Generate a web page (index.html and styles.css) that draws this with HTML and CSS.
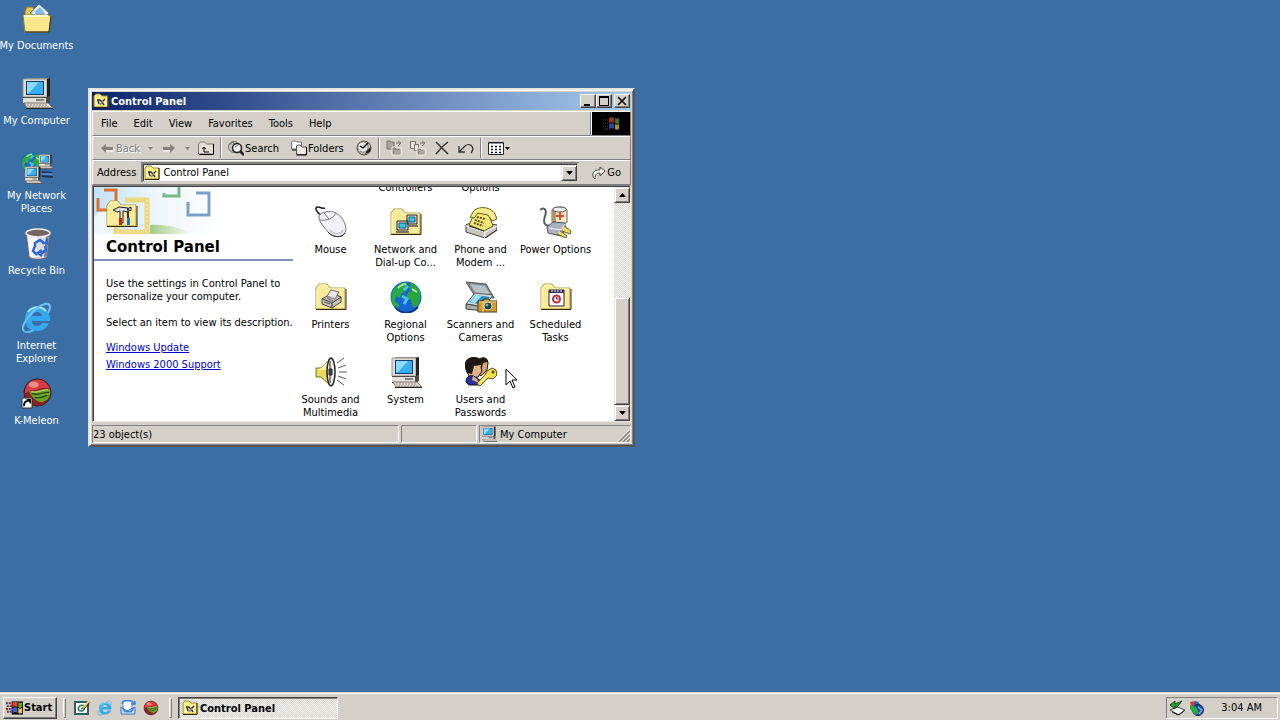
FILE: index.html
```html
<!DOCTYPE html>
<html lang="en">
<head>
    <meta charset="UTF-8">
    <meta name="viewport" content="width=device-width, initial-scale=1.0">
    <title>Control Panel</title>
    <link rel="stylesheet" href="styles.css">
</head>
<body>

    <!-- Shared icons -->
    <svg class="sprite" aria-hidden="true">
        <symbol id="computer" viewBox="0 0 32 32">
            <path d="M3 3l3-2h22v19l-3 2z" fill="#8c8a86"/>
            <path d="M2 2h24v18H2z" fill="#dedbd3" stroke="#98958e"/>
            <path d="M26 2l3-1v18l-3 2z" fill="#222"/>
            <path d="M5 4h18v14H5z" fill="#113a6e"/>
            <path d="M6 5h16v12H6z" fill="#39aef5"/>
            <path d="M6 5h12L8 16H6z" fill="#8edaff"/>
            <path d="M2 20h24l3-1v6l-3 2H2z" fill="#4c4946"/>
            <path d="M2 21h23v5H2z" fill="#e4e0d9"/>
            <path d="M15 23h8" stroke="#222"/>
            <path d="M3 26h24l5 5H6z" fill="#e9ded6" stroke="#77706c"/>
            <path d="M6 28h20M8 30h20" stroke="#8b827c" stroke-dasharray="2 1"/>
            <path d="M5 31.500h27" stroke="#222"/>
        </symbol>
        <symbol id="folder" viewBox="0 0 32 32">
            <path d="M1 28V7l3-4h8l3 4h15v21z" fill="#fcea98" stroke="#b59a35"/>
            <path d="M2 27V8l3-4h6l3 4h15" fill="none" stroke="#fffbd0"/>
            <path d="M31 8v20.500H1" fill="none" stroke="#32290c"/>
        </symbol>
        <symbol id="cpanel" viewBox="0 0 16 16">
            <path d="M1 14V3l2-2h4l2 2h6v11z" fill="#fbec84" stroke="#a08c28"/>
            <path d="M15 3v11.500H1" fill="none" stroke="#2b2406"/>
            <path d="M3 6h10v6H3z" fill="#fff3b4"/>
            <path d="M4 7h3l2 2 3-3M5 7l1 4M9 9l2 3" fill="none" stroke="#33332b" stroke-width="1.500"/>
            <path d="M10 8l-3 4" stroke="#888" stroke-width="1.500"/>
        </symbol>
        <symbol id="ie" viewBox="0 0 32 32">
            <path d="M16 4C8 4 4 10 4 17c0 8 5 12 12 12 6 0 10-3 12-8h-7c-1 2-3 3-5 3-3 0-5-2-5-5h18C29 9 25 4 16 4zm-5 10c1-3 3-4 5-4 3 0 5 2 5 4z" fill="#35a9ed"/>
            <path d="M7 10c4-5 12-7 18-1" fill="none" stroke="#a5e3ff" stroke-width="2"/>
            <path d="M3 29c-5-5 11-25 21-27 6-1 6 4 3 9" fill="none" stroke="#6fc3f4" stroke-width="2"/>
            <path d="M3 29c2 2 6 1 10-1" fill="none" stroke="#5cb7ee" stroke-width="2"/>
        </symbol>
        <symbol id="kmeleon" viewBox="0 0 32 32">
            <circle cx="16" cy="16" r="14" fill="#8f1f22" stroke="#3c2016"/>
            <path d="M3 17C3 5 12 2 18 3c6 1 9 5 11 9-9-3-13 3-21 2z" fill="#d93b45"/>
            <ellipse cx="12" cy="8" rx="5" ry="3" fill="#f08c8b"/>
            <path d="M7 14c7 3 13-3 22-1 1 8-3 12-9 13-6-1-10-5-13-12z" fill="#69a82d"/>
            <path d="M10 17c6 3 12-2 18-1M13 21c5 2 9-1 13-2" fill="none" stroke="#28500d" stroke-width="1.500"/>
            <path d="M10 15c6 2 10-2 17-2" fill="none" stroke="#c7e36d"/>
        </symbol>
        <symbol id="globe" viewBox="0 0 32 32">
            <circle cx="16" cy="16" r="15.500" fill="#1766d2"/>
            <path d="M3 10c4-7 10-9 15-8l-3 4 2 3-6 4-1 4-4-2-1 5 4 3-1 5C2 25-1 17 3 10z" fill="#2cab44"/>
            <path d="M21 2c6 2 9 7 10 12l-2 9-4 4-3-3-1-5-5-2 2-6 4-1-3-4z" fill="#29a440"/>
            <path d="M8 7c2-2 5-4 8-4M22 8l5 3" stroke="#a6ee85" stroke-width="2" fill="none"/>
            <path d="M12 15l5 3-3 5M18 5l-4 4" stroke="#4fc0f5" stroke-width="3" fill="none"/>
            <path d="M5 26c5 7 16 8 23 0" fill="none" stroke="#0d348d" stroke-width="2"/>
        </symbol>
        <symbol id="windows" viewBox="0 0 18 16">
            <path d="M7 2c2-1 3-1 5 0v5c-2-1-3-1-5 0z" fill="#ef4228"/>
            <path d="M13 2c1 1 3 1 4 0v5c-1 1-3 1-4 0z" fill="#49b12c"/>
            <path d="M7 8c2-1 3-1 5 0v5c-2-1-3-1-5 0z" fill="#3864e2"/>
            <path d="M13 8c1 1 3 1 4 0v5c-1 1-3 1-4 0z" fill="#f6cf26"/>
        </symbol>
    </svg>

    <!-- Desktop -->
    <main class="desktop">
        <div class="shortcuts">
            <button class="shortcut">
                <svg viewBox="0 0 32 32">
                    <path d="M4 9l2-4h6l2 4h13v8H4z" fill="#e8c954" stroke="#8b7226"/>
                    <path d="M9 11l9-9 10 9-6 8z" fill="#e9f4fa" stroke="#577ca0"/>
                    <path d="M13 10l6-5 5 6-4 6z" fill="#86bce1"/>
                    <path d="M2 13h25l3 1-2 16H4z" fill="#f8e78c" stroke="#967f2e"/>
                    <path d="M3 14h24" fill="none" stroke="#fffbd0" stroke-width="2"/>
                    <path d="M4 30h24l2-16" fill="none" stroke="#37300e"/>
                </svg>
                <span>My&nbsp;Documents</span>
            </button>
            <button class="shortcut">
                <svg><use href="#computer"/></svg>
                <span>My Computer</span>
            </button>
            <button class="shortcut">
                <svg viewBox="0 0 32 32">
                    <use href="#globe" width="22" height="22"/>
                    <use href="#computer" x="17" y="1" width="15" height="17"/>
                    <use href="#computer" x="3" y="14" width="18" height="18"/>
                    <path d="M21 20l10 1M21 24l11 1" stroke="#16355e" stroke-width="2"/>
                    <path d="M21 22h10" stroke="#78a9e7"/>
                </svg>
                <span>My Network Places</span>
            </button>
            <button class="shortcut">
                <svg viewBox="0 0 32 32">
                    <path d="M5 6l3 24c3 3 14 3 18 0l3-24z" fill="#dedbe2" stroke="#62616a"/>
                    <path d="M7 9l2 20c2 1 5 1 7 1V10z" fill="#fff" opacity=".8"/>
                    <path d="M25 9l-2 21 3-1 2-21z" fill="#85818a"/>
                    <ellipse cx="17" cy="6" rx="12" ry="4" fill="#756365" stroke="#eee" stroke-width="1.500"/>
                    <path d="M14 20v-4l5-3 4 3m-2 0h5v-4M24 19l1 4-5 4m1-4l-4 3 4 3M16 28l-4-4 2-5" fill="none" stroke="#2867dc" stroke-width="2.500"/>
                </svg>
                <span>Recycle Bin</span>
            </button>
            <button class="shortcut">
                <svg><use href="#ie"/></svg>
                <span>Internet Explorer</span>
            </button>
            <button class="shortcut">
                <svg viewBox="0 0 32 32">
                    <use href="#kmeleon" x="1" width="31" height="31"/>
                    <path d="M1 21h10v10H1z" fill="#fff" stroke="#333"/>
                    <path d="M3 29c0-4 1-5 4-5" fill="none" stroke="#000" stroke-width="2"/>
                    <path d="M5 22h5v5z" fill="#000"/>
                </svg>
                <span>K-Meleon</span>
            </button>
        </div>

        <!-- Control Panel window -->
        <section class="window">
            <header class="titlebar">
                <svg class="icon-small"><use href="#cpanel"/></svg>
                <h1>Control Panel</h1>
                <div class="window-buttons">
                    <button aria-label="Minimize"><svg viewBox="0 0 10 10"><path d="M1 8h6v2H1z"/></svg></button>
                    <button aria-label="Maximize"><svg viewBox="0 0 10 10"><path fill-rule="evenodd" d="M0 0h10v10H0zM1 2v7h8V2z"/></svg></button>
                    <button class="close" aria-label="Close"><svg viewBox="0 0 10 10"><path d="M1 1l8 8M9 1l-8 8" stroke="#000" stroke-width="1.600"/></svg></button>
                </div>
            </header>

            <div class="menu-row">
                <nav class="menubar">
                    <button>File</button>
                    <button>Edit</button>
                    <button>View</button>
                    <button>Favorites</button>
                    <button>Tools</button>
                    <button>Help</button>
                </nav>
                <div class="brand"><svg viewBox="0 0 18 16"><path d="M1 4h5M1 7h5M1 10h5M3 13h4" stroke="#777" stroke-dasharray="1 1"/><use href="#windows"/></svg></div>
            </div>

            <div class="toolbar">
                <button class="tool disabled" disabled>
                    <svg viewBox="0 0 16 16"><path d="M2 8l5-4v3h7v3H7v3z" fill="#858178"/><path d="M7 11h8V8" fill="none" stroke="#fff"/></svg>
                    Back
                </button>
                <button class="caret disabled" disabled aria-label="Back list"><svg viewBox="0 0 5 3"><path d="M0 0h5L2.500 3z"/></svg></button>
                <button class="tool disabled" disabled aria-label="Forward">
                    <svg viewBox="0 0 16 16"><path d="M14 8L9 4v3H2v3h7v3z" fill="#858178"/><path d="M2 11h7" stroke="#fff"/></svg>
                </button>
                <button class="caret disabled" disabled aria-label="Forward list"><svg viewBox="0 0 5 3"><path d="M0 0h5L2.500 3z"/></svg></button>
                <button class="tool" aria-label="Up">
                    <svg viewBox="0 0 16 16"><path d="M.5 14V4l2-2h4l2 2h7v10z" fill="#e4e0d8" stroke="#77736b"/><path d="M15.500 4v10.500H1" fill="none" stroke="#000"/><path d="M6 12V8m0 4h5M4 9l2-2 2 2" fill="none" stroke="#000"/></svg>
                </button>
                <span class="divider"></span>
                <button class="tool">
                    <svg viewBox="0 0 16 16"><circle cx="6" cy="7" r="5.500" fill="#cbc7bf" stroke="#77736b"/><path d="M1 5l4-3 2 4-3 5" fill="none" stroke="#77736b"/><circle cx="9" cy="8" r="4.500" fill="#efede8" stroke="#222" stroke-width="1.500"/><path d="M12 11l4 4" stroke="#222" stroke-width="2.500"/><path d="M7 7l3-2" stroke="#777"/></svg>
                    Search
                </button>
                <button class="tool spaced">
                    <svg viewBox="0 0 16 16"><path d="M.5 9V2l1-1h3l1 1h5v7z" fill="#fff" stroke="#77736b"/><path d="M5.500 14.500V6l1-1h3l1 2h5v7.500z" fill="#eeebe4" stroke="#55524b"/><path d="M15.500 7v8H5.500M1 10h4" fill="none" stroke="#000"/></svg>
                    Folders
                </button>
                <button class="tool spaced" aria-label="History">
                    <svg viewBox="0 0 16 16"><circle cx="8" cy="8" r="7" fill="#bbb7af" stroke="#4e4b45"/><path d="M9 14l5-2 1-5-4 3z" fill="#222"/><circle cx="7" cy="7" r="5" fill="#eae7e0" stroke="#77736b" stroke-dasharray="2 1"/><path d="M7 8l5-5M7 8L4 6" stroke="#111" stroke-width="1.500"/></svg>
                </button>
                <span class="divider"></span>
                <button class="tool" aria-label="Move To">
                    <svg viewBox="0 0 16 16"><path d="M1 1h3l1 1h3v7H1z" fill="#aba79f" stroke="#77736b"/><path d="M6 15V7h3l1 1h5v7z" fill="#8c8880" stroke="#f4f2ed"/><path d="M8 11h6M8 13h6" stroke="#c8c4bc"/><path d="M10 3h5M12 1l3 2-3 3" fill="none" stroke="#77736b"/></svg>
                </button>
                <button class="tool" aria-label="Copy To">
                    <svg viewBox="0 0 16 16"><path d="M.5 1.500h5v7h-5z" fill="#eae7e0" stroke="#77736b"/><path d="M4.500 4.500h4v6h-4z" fill="#eae7e0" stroke="#77736b"/><path d="M7 15V8h3l1 1h4v6z" fill="#8c8880" stroke="#f4f2ed"/><path d="M9 11h5M9 13h5" stroke="#c8c4bc"/><path d="M10 3h5M12 1l3 2-3 3" fill="none" stroke="#77736b"/></svg>
                </button>
                <button class="tool" aria-label="Delete">
                    <svg viewBox="0 0 16 16"><path d="M2 2l6 6 6 6M14 2L8 7l-6 7" fill="none" stroke="#333" stroke-width="1.500"/></svg>
                </button>
                <button class="tool" aria-label="Undo">
                    <svg viewBox="0 0 16 16"><path d="M1 6v6h6M1 12l6-6c4-4 11 1 6 7" fill="none" stroke="#333" stroke-width="1.300"/></svg>
                </button>
                <span class="divider"></span>
                <button class="tool views" aria-label="Views">
                    <svg viewBox="0 0 16 16"><path d="M.5 2.500h15v12H.5z" fill="#fff" stroke="#222"/><path d="M1 3h14" stroke="#222"/><path d="M3 6.500h11M3 9.500h11M3 12.500h11" stroke="#111" stroke-width="1.500" stroke-dasharray="2 2"/></svg>
                </button>
                <button class="caret" aria-label="View list"><svg viewBox="0 0 5 3"><path d="M0 0h5L2.500 3z"/></svg></button>
            </div>

            <div class="addressbar">
                <label for="address">Address</label>
                <div class="combo">
                    <svg class="icon-small"><use href="#cpanel"/></svg>
                    <input id="address" type="text" value="Control Panel">
                    <button aria-label="Open address list"><svg viewBox="0 0 7 4"><path d="M0 0h7L3.500 4z"/></svg></button>
                </div>
                <button class="go">
                    <svg viewBox="0 0 16 16"><path d="M4 14c-5-4-1-10 5-9V2l5 4-5 5V8c-4 0-5 2-5 6z" fill="#f7f5f0" stroke="#444"/></svg>
                    Go
                </button>
            </div>

            <div class="view">
                <aside class="info">
                    <svg class="banner" viewBox="0 0 200 47">
                        <defs>
                            <linearGradient id="sky">
                                <stop offset="0" stop-color="#c3e1f8"/>
                                <stop offset=".5" stop-color="#ecf7fc"/>
                                <stop offset="1" stop-color="#fff"/>
                            </linearGradient>
                            <linearGradient id="grass">
                                <stop offset="0" stop-color="#a4cb87"/>
                                <stop offset="1" stop-color="#fff"/>
                            </linearGradient>
                        </defs>
                        <path d="M0 0h125v47H0z" fill="url(#sky)"/>
                        <path d="M0 30c7-7 13-10 22-13v30H0z" fill="#fff" opacity=".7"/>
                        <path d="M56 38c14-1 28 2 44 9H56z" fill="url(#grass)"/>
                        <path d="M10 3h12v12M4 11v12h9" fill="none" stroke="#d67436" stroke-width="3"/>
                        <path d="M85 0v9H70V6" fill="none" stroke="#79b783" stroke-width="3"/>
                        <path d="M102 6h13v22H94V15" fill="none" stroke="#7c9fcc" stroke-width="3"/>
                        <path d="M31 13h22v32H22V35" fill="none" stroke="#eed77f" stroke-width="5"/>
                        <path d="M53 13v32H22" fill="none" stroke="#fbf0bb" stroke-dasharray="2 2"/>
                        <use href="#folder" x="12" y="11" width="32" height="32"/>
                        <path d="M19 23l6-3 9 1v4l-5-1v12h-3V24l-3 1zM33 22l4-2v4z" fill="#ddd" stroke="#222"/>
                        <path d="M25 31h3v7h-3z" fill="#c52a19"/>
                        <path d="M33 31h3v7h-3z" fill="#2871bd"/>
                        <path d="M34 24v7" stroke="#333" stroke-width="2"/>
                    </svg>
                    <h2>Control Panel</h2>
                    <div class="info-text">
                        <p>Use the settings in Control Panel to personalize your computer.</p>
                        <p>Select an item to view its description.</p>
                        <a href="#update">Windows Update</a>
                        <a href="#support">Windows 2000 Support</a>
                    </div>
                </aside>

                <div class="items">
                    <span class="above first">Controllers</span>
                    <span class="above">Options</span>
                    <span class="above"></span>
                    <button class="item">
                        <svg viewBox="0 0 32 32">
                            <path d="M6 9C1 6-1 1 3 1c3 0 4 2 7 1" fill="none" stroke="#222" stroke-width="1.500"/>
                            <path d="M4 10c1-4 12-6 17-3 7 4 12 14 9 20-3 5-12 5-17-1C9 21 3 15 4 10z" fill="#f2f1f5" stroke="#77757b"/>
                            <path d="M30 27c-3 5-12 5-17-1" fill="none" stroke="#222"/>
                            <path d="M5 14c6 1 13-1 16-7M9 7l5 6" fill="none" stroke="#77757b"/>
                            <path d="M15 24c4 5 11 5 13 0" fill="none" stroke="#c8c5cc" stroke-width="2"/>
                        </svg>
                        <span>Mouse</span>
                    </button>
                    <button class="item">
                        <svg viewBox="0 0 32 32">
                            <use href="#folder" width="32" height="32"/>
                            <path d="M17 9h10v9H17zM7 15h11v9H7z" fill="#e0ddd6" stroke="#222"/>
                            <path d="M19 11h6v5h-6zM9 17h7v5H9z" fill="#35c5df" stroke="#155e80"/>
                            <path d="M18 20h10M6 26h13" stroke="#77736b" stroke-width="2"/>
                        </svg>
                        <span>Network and Dial-up Co...</span>
                    </button>
                    <button class="item">
                        <svg viewBox="0 0 32 32">
                            <path d="M1 19l8-4 23 4v5l-12 8L1 26z" fill="#c9c6c2" stroke="#444"/>
                            <path d="M1 20l19 6 12-6M20 26v6" fill="none" stroke="#fff"/>
                            <path d="M4 19l6-13 13 1 5 13-9 5z" fill="#f4e577" stroke="#665c1c"/>
                            <path d="M7 8c3-9 19-8 23 0l2 5-5 2-4-6-10-2-4 5-4-1z" fill="#f7ed8a" stroke="#665c1c"/>
                            <path d="M12 11l8 2M10 14l9 3M9 17l9 3" stroke="#615415" stroke-width="2" stroke-dasharray="2 1"/>
                            <path d="M20 32l12-8M4 20l15 5" fill="none" stroke="#222"/>
                        </svg>
                        <span>Phone and Modem ...</span>
                    </button>
                    <button class="item">
                        <svg viewBox="0 0 32 32">
                            <path d="M0 4c5-4 7 1 5 6-2 6-1 10 6 10" fill="none" stroke="#555d68" stroke-width="2"/>
                            <path d="M12 4c2-4 13-4 15 0v12c-3 3-12 3-15 0z" fill="#f5ecc7" stroke="#666"/>
                            <path d="M12 4v13l4 1V5z" fill="#b8955f"/>
                            <ellipse cx="19.500" cy="3.500" rx="7" ry="2.500" fill="#eee" stroke="#555"/>
                            <path d="M20 6v8M16 10h8" stroke="#dd5031" stroke-width="2"/>
                            <path d="M7 21l6-5 12 1v7l-4 6-13-3z" fill="#adb2c0" stroke="#4c5262"/>
                            <path d="M9 22l12 2 4-6" fill="none" stroke="#edf0fa"/>
                            <path d="M24 20l7 5-1 3-8-3M20 25l7 5-1 2-9-4" fill="#f6dc66" stroke="#675827"/>
                        </svg>
                        <span>Power Options</span>
                    </button>
                    <button class="item">
                        <svg viewBox="0 0 32 32">
                            <use href="#folder" width="32" height="32"/>
                            <path d="M7 18l10-6 9 4v5l-9 6-10-4z" fill="#c9c2c1" stroke="#444"/>
                            <path d="M8 18l9 4 9-6M17 22v5" fill="none" stroke="#333"/>
                            <path d="M12 15l4-6 8 2-4 7z" fill="#e9e6e5" stroke="#77706e"/>
                            <path d="M12 17l6 3M9 21l6 2" stroke="#555"/>
                        </svg>
                        <span>Printers</span>
                    </button>
                    <button class="item">
                        <svg><use href="#globe"/></svg>
                        <span>Regional Options</span>
                    </button>
                    <button class="item">
                        <svg viewBox="0 0 32 32">
                            <path d="M1 1l20 2 8 14-19-2z" fill="#858b91" stroke="#4b5157"/>
                            <path d="M5 3l15 2 6 10-15-2z" fill="#b9c1c5"/>
                            <path d="M10 12l18 2-9 12-18-3z" fill="#d9dce0" stroke="#555"/>
                            <path d="M11 14l14 2-8 8-13-3z" fill="#2d8bd0"/>
                            <path d="M11 14l6 1-7 7-5-1z" fill="#9be5ff"/>
                            <path d="M1 23l18 3v4L1 28z" fill="#aaa" stroke="#444"/>
                            <path d="M13 20h5l1-2h5l1 2h7v11H13z" fill="#cf9c32" stroke="#4c360f"/>
                            <path d="M14 21h17M18 21v10" stroke="#f4d474"/>
                            <circle cx="23" cy="25" r="4" fill="#173e3e" stroke="#e7dab1"/>
                            <circle cx="22" cy="24" r="1.500" fill="#75bcbf"/>
                        </svg>
                        <span>Scanners and Cameras</span>
                    </button>
                    <button class="item">
                        <svg viewBox="0 0 32 32">
                            <use href="#folder" width="32" height="32"/>
                            <path d="M9 9h15v16H9z" fill="#fff" stroke="#262226"/>
                            <path d="M9 9h15v3H9z" fill="#34325c"/>
                            <path d="M11 10h11" stroke="#fff" stroke-dasharray="2 1"/>
                            <circle cx="16.500" cy="18" r="3.500" fill="#fff" stroke="#cc2538" stroke-width="2"/>
                            <path d="M16.500 16v2h2" fill="none" stroke="#222"/>
                        </svg>
                        <span>Scheduled Tasks</span>
                    </button>
                    <button class="item">
                        <svg viewBox="0 0 32 32">
                            <path d="M1 12h5l9-9v26l-9-8H1z" fill="#e9dc5c" stroke="#797024"/>
                            <path d="M6 12l9-9v11H2" fill="#faf5a4"/>
                            <ellipse cx="16" cy="16" rx="4" ry="14" fill="#eee" stroke="#222" stroke-width="1.500"/>
                            <path d="M15 5v22" stroke="#888" stroke-width="2"/>
                            <path d="M14 13h3v6h-3z" fill="#444a66" stroke="#222"/>
                            <path d="M22 7l7-5M23 12l8-3M24 16h8M23 20l8 3M22 24l7 5" stroke="#555"/>
                        </svg>
                        <span>Sounds and Multimedia</span>
                    </button>
                    <button class="item">
                        <svg><use href="#computer"/></svg>
                        <span>System</span>
                    </button>
                    <button class="item">
                        <svg viewBox="0 0 32 32">
                            <path d="M13 6c3-6 10-5 10 1l-1 7-6 6-5-4z" fill="#dba577" stroke="#21170f"/>
                            <path d="M11 9c0-9 12-10 12-3l-5 1-2 9-4-1z" fill="#231b17"/>
                            <path d="M2 16C-2 7 2 1 10 2c6 0 8 5 6 9l1 4-4 6-8 1z" fill="#e5b184" stroke="#21170f"/>
                            <path d="M2 17C-3 8 1 1 9 1c6 0 8 4 7 8l-7 1-2 8z" fill="#1d1715"/>
                            <path d="M1 26c0-6 5-8 9-5l8 5-3 3H4z" fill="#27329c" stroke="#10143e"/>
                            <path d="M8 20l4 3 2 4-7-3z" fill="#e5b184"/>
                            <path d="M22 15l5-3 4 2 1 5-4 4-5-1-6 6-2 2-3-2 1-2 7-7z" fill="#f5de4c" stroke="#60510e"/>
                            <circle cx="28" cy="16" r="1.500" fill="#5a4d12"/>
                            <path d="M14 27l8-7" stroke="#fff8aa"/>
                        </svg>
                        <span>Users and Passwords</span>
                    </button>
                </div>

                <div class="scrollbar">
                    <button aria-label="Scroll up"><svg viewBox="0 0 7 4"><path d="M3.500 0L7 4H0z"/></svg></button>
                    <div class="track"></div>
                    <div class="thumb"></div>
                    <button aria-label="Scroll down"><svg viewBox="0 0 7 4"><path d="M0 0h7L3.500 4z"/></svg></button>
                </div>
            </div>

            <footer class="statusbar">
                <span class="pane count">23 object(s)</span>
                <span class="pane empty"></span>
                <span class="pane zone">
                    <svg class="icon-small"><use href="#computer"/></svg>
                    My Computer
                    <svg class="grip" viewBox="0 0 12 12"><path d="M1 12L12 1M5 12l7-7M9 12l3-3" stroke="#858178" stroke-width="1.500"/><path d="M0 11L11 0M4 11l8-8M8 11l4-4" stroke="#fff"/></svg>
                </span>
            </footer>
        </section>

        <svg class="cursor" viewBox="0 0 13 21"><path d="M1 1v16l4-4 3 7 2-1-3-7h5z" fill="#fff" stroke="#000"/></svg>
    </main>

    <!-- Taskbar -->
    <footer class="taskbar">
        <button class="start">
            <svg viewBox="0 0 18 16"><path d="M0 3h6M1 6h5M0 9h6M1 12h5" stroke="#722542" stroke-width="2" stroke-dasharray="2 1"/><path d="M6 1h12v14H6z" fill="#111"/><use href="#windows"/></svg>
            Start
        </button>
        <span class="handle"></span>
        <div class="quick-launch">
            <button aria-label="Show Desktop">
                <svg viewBox="0 0 16 16"><path d="M0 1h15v14H0z" fill="#315f62"/><path d="M2 3h11v10H2z" fill="#fff"/><path d="M11 6c-7-3-9 5-4 5 3 0 4-2 3-4L7 9" fill="none" stroke="#2c7560" stroke-width="1.500"/><path d="M15 1L9 8" stroke="#edcf54" stroke-width="2"/><path d="M16 2l-6 7" stroke="#222"/></svg>
            </button>
            <button aria-label="Internet Explorer"><svg><use href="#ie"/></svg></button>
            <button aria-label="Outlook Express">
                <svg viewBox="0 0 16 16"><path d="M3 1h9v11H3z" fill="#f5faff" stroke="#5b91d4"/><path d="M1 7l6 4 8-4v7H1z" fill="#bddbf9" stroke="#4277c4"/><path d="M2 4c0-5 12-5 12 1M11 4h4V1M13 8c0 5-9 5-10 0" fill="none" stroke="#3d83d9" stroke-width="1.500"/></svg>
            </button>
            <button aria-label="K-Meleon"><svg><use href="#kmeleon"/></svg></button>
        </div>
        <span class="handle"></span>
        <button class="task">
            <svg class="icon-small"><use href="#cpanel"/></svg>
            Control Panel
        </button>
        <div class="tray">
            <svg viewBox="0 0 16 16"><path d="M1 10l7-3 8 3-6 5z" fill="#f6f6f2" stroke="#444"/><path d="M1 5l5-4v3l7-3-5 6-2-1v3z" fill="#2b9d34" stroke="#12511b"/><path d="M3 12l6 3 6-4" fill="none" stroke="#111"/></svg>
            <svg viewBox="0 0 16 16"><path d="M2 2l5-1 2 6-5 3z" fill="#d93438"/><path d="M7 1c4 0 5 3 5 6L6 6z" fill="#2865c6"/><circle cx="10" cy="10" r="5.500" fill="#244ba4" stroke="#142450"/><path d="M2 5l6 2 3 6-4 2-5-6z" fill="#27a94b"/><path d="M10 7l4 3-3 4" fill="none" stroke="#6fa9ef" stroke-width="1.500"/></svg>
            <time>3:04 AM</time>
        </div>
    </footer>

</body>
</html>
```
FILE: styles.css
```css
* {
    box-sizing: border-box;
}

body {
    margin: 0;
    height: 100vh;
    display: flex;
    flex-direction: column;
    overflow: hidden;
    background-color: #3a6ea5;
    color: #000;
    font-family: "DejaVu Sans Condensed", "DejaVu Sans", sans-serif;
    font-size: 11px;
    line-height: 13px;
}

button,
input {
    margin: 0;
    padding: 0;
    border: 0;
    background: none;
    color: inherit;
    font: inherit;
}

svg {
    display: block;
    flex: none;
}

.sprite {
    position: absolute;
    width: 0;
    height: 0;
}

.icon-small {
    width: 16px;
    height: 16px;
}

/* Desktop */
.desktop {
    flex: 1;
    min-height: 0;
}

.shortcuts {
    display: flex;
    flex-direction: column;
    gap: 12px;
    width: 73px;
    padding-top: 2px;
}

.shortcut,
.item {
    display: flex;
    flex-direction: column;
    align-items: center;
    gap: 5px;
    height: 63px;
    text-align: center;
}

.shortcut {
    color: #fff;
}

.shortcut svg,
.item svg {
    width: 32px;
    height: 32px;
}

/* Window */
.window {
    position: absolute;
    top: 88px;
    left: 88px;
    width: 547px;
    padding: 2px;
    background-color: #d4d0c8;
    border: 2px solid;
    border-color: #e8e5df #555 #555 #e8e5df;
    box-shadow: inset 1px 1px #fff, inset -1px -1px #808080;
}

.titlebar {
    display: flex;
    align-items: center;
    gap: 2px;
    height: 18px;
    padding: 0 1px 0 1px;
    background: linear-gradient(to right, #0a246a, #a6caf0);
    color: #fff;
}

.titlebar h1 {
    flex: 1;
    margin: 0;
    font-size: 11px;
    font-weight: bold;
}

.window-buttons {
    display: flex;
}

.window-buttons button {
    display: flex;
    align-items: center;
    justify-content: center;
    width: 16px;
    height: 14px;
    background-color: #d4d0c8;
    border: 1px solid;
    border-color: #fff #404040 #404040 #fff;
    box-shadow: inset -1px -1px #808080;
}

.window-buttons .close {
    margin-left: 2px;
}

.window-buttons svg {
    width: 10px;
    height: 10px;
}

/* Menu and toolbars */
.menu-row {
    display: flex;
    height: 25px;
    margin-top: 1px;
    border: 1px solid;
    border-color: #fff #808080 #808080 #fff;
}

.menubar {
    display: flex;
    flex: 1;
    align-items: center;
    border-right: 1px solid #808080;
}

.menubar button {
    padding: 4px 8px;
}

.brand {
    display: flex;
    align-items: center;
    justify-content: center;
    width: 39px;
    background-color: #000;
    border-left: 1px solid #fff;
}

.brand svg {
    width: 18px;
    height: 16px;
    opacity: .7;
}

.toolbar {
    display: flex;
    align-items: center;
    height: 24px;
    border: 1px solid;
    border-color: #fff #808080 #808080 #fff;
    padding-left: 2px;
}

.tool {
    display: flex;
    align-items: center;
    gap: 1px;
    height: 22px;
    padding: 0 4px;
}

.tool.spaced {
    margin-left: 4px;
}

.tool.views {
    padding-right: 1px;
}

.tool svg,
.go svg {
    width: 16px;
    height: 16px;
}

.tool.disabled {
    color: #808080;
    text-shadow: 1px 1px #fff;
}

.caret {
    padding: 0 4px;
}

.views + .caret {
    padding: 0;
}

.caret svg {
    width: 5px;
    height: 3px;
}

.caret.disabled svg {
    fill: #808080;
}

.divider {
    width: 2px;
    height: 20px;
    margin: 0 2px;
    border-left: 1px solid #808080;
    border-right: 1px solid #fff;
}

.addressbar {
    display: flex;
    align-items: center;
    gap: 5px;
    height: 25px;
    padding: 0 4px;
    border: 1px solid;
    border-color: #fff #808080 #808080 #fff;
}

.combo {
    display: flex;
    flex: 1;
    align-items: center;
    gap: 3px;
    height: 21px;
    padding-left: 1px;
    background-color: #fff;
    border: 2px solid;
    border-color: #808080 #d4d0c8 #d4d0c8 #808080;
    box-shadow: inset 1px 1px #404040;
}

.combo input {
    flex: 1;
    min-width: 0;
}

.combo button,
.scrollbar button {
    display: flex;
    align-items: center;
    justify-content: center;
    width: 16px;
    height: 16px;
    background-color: #d4d0c8;
    border: 1px solid;
    border-color: #eae7e1 #404040 #404040 #eae7e1;
    box-shadow: inset 1px 1px #fff, inset -1px -1px #808080;
}

.combo button svg,
.scrollbar svg {
    width: 7px;
    height: 4px;
}

.go {
    display: flex;
    align-items: center;
    padding: 0 5px 0 7px;
}

/* Folder view */
.view {
    display: flex;
    height: 237px;
    padding: 1px 0 0 1px;
    background-color: #fff;
    border: 1px solid;
    border-color: #808080 #e8e5df #e8e5df #808080;
    box-shadow: inset 1px 1px #404040;
}

.info {
    width: 199px;
}

.banner {
    width: 200px;
    height: 47px;
}

.info h2 {
    margin: 0;
    padding: 3px 12px 2px;
    border-bottom: 2px solid #7b96ba;
    font-family: "DejaVu Sans", sans-serif;
    font-size: 15px;
    font-weight: bold;
    line-height: 20px;
}

.info-text {
    display: flex;
    flex-direction: column;
    align-items: flex-start;
    padding: 16px 0 0 12px;
}

.info-text p {
    margin: 0 0 13px;
}

.info-text a {
    margin-bottom: 4px;
    color: #0000cc;
}

.info-text p + a {
    margin-top: -1px;
}

.items {
    display: grid;
    grid-template-columns: repeat(4, 75px);
    align-content: end;
    row-gap: 12px;
    flex: 1;
    padding-bottom: 2px;
    overflow: hidden;
}

.above {
    text-align: center;
}

.above.first {
    grid-column: 2;
}

.scrollbar {
    display: flex;
    flex-direction: column;
    width: 16px;
}

.track {
    flex: 95;
    background: repeating-conic-gradient(#fff 0 25%, #d4d0c8 0 50%) 0 0 / 2px 2px;
}

.thumb {
    flex: 108;
    background-color: #d4d0c8;
    border: 1px solid;
    border-color: #eae7e1 #404040 #404040 #eae7e1;
    box-shadow: inset 1px 1px #fff, inset -1px -1px #808080;
}

/* Status bar */
.statusbar {
    display: flex;
    gap: 2px;
    height: 21px;
    padding-top: 3px;
}

.pane {
    display: flex;
    align-items: center;
    gap: 3px;
    padding-left: 1px;
    border: 1px solid;
    border-color: #808080 #fff #fff #808080;
}

.count {
    flex: 1;
    padding-left: 0;
}

.empty {
    width: 76px;
}

.zone {
    width: 152px;
}

.grip {
    align-self: flex-end;
    width: 12px;
    height: 12px;
    margin-left: auto;
}

.cursor {
    position: absolute;
    top: 368px;
    left: 505px;
    width: 13px;
    height: 21px;
}

/* Taskbar */
.taskbar {
    display: flex;
    align-items: center;
    height: 28px;
    padding: 2px 2px 0 3px;
    background-color: #d4d0c8;
    border-top: 1px solid #d4d0c8;
    box-shadow: inset 0 1px #fff;
}

.start {
    display: flex;
    align-items: center;
    gap: 1px;
    width: 54px;
    height: 22px;
    padding-left: 2px;
    border: 1px solid;
    border-color: #fff #404040 #404040 #fff;
    box-shadow: inset -1px -1px #808080;
    font-weight: bold;
}

.start svg {
    width: 17px;
    height: 16px;
}

.handle {
    width: 3px;
    height: 20px;
    margin: 0 6px;
    border: 1px solid;
    border-color: #fff #808080 #808080 #fff;
}

.quick-launch {
    display: flex;
    gap: 7px;
    padding: 0 4px 0 2px;
}

.quick-launch svg {
    width: 16px;
    height: 16px;
}

.task {
    display: flex;
    align-items: center;
    gap: 2px;
    width: 160px;
    height: 22px;
    padding: 1px 0 0 3px;
    background: repeating-conic-gradient(#fff 0 25%, #d4d0c8 0 50%) 0 0 / 2px 2px;
    border: 1px solid;
    border-color: #404040 #fff #fff #404040;
    box-shadow: inset 1px 1px #808080;
    font-weight: bold;
}

.tray {
    display: flex;
    align-items: center;
    gap: 3px;
    width: 112px;
    height: 22px;
    margin-left: auto;
    padding-left: 2px;
    border: 1px solid;
    border-color: #808080 #fff #fff #808080;
}

.tray svg {
    width: 16px;
    height: 16px;
}

.tray time {
    margin: 0 15px 0 auto;
}
```
